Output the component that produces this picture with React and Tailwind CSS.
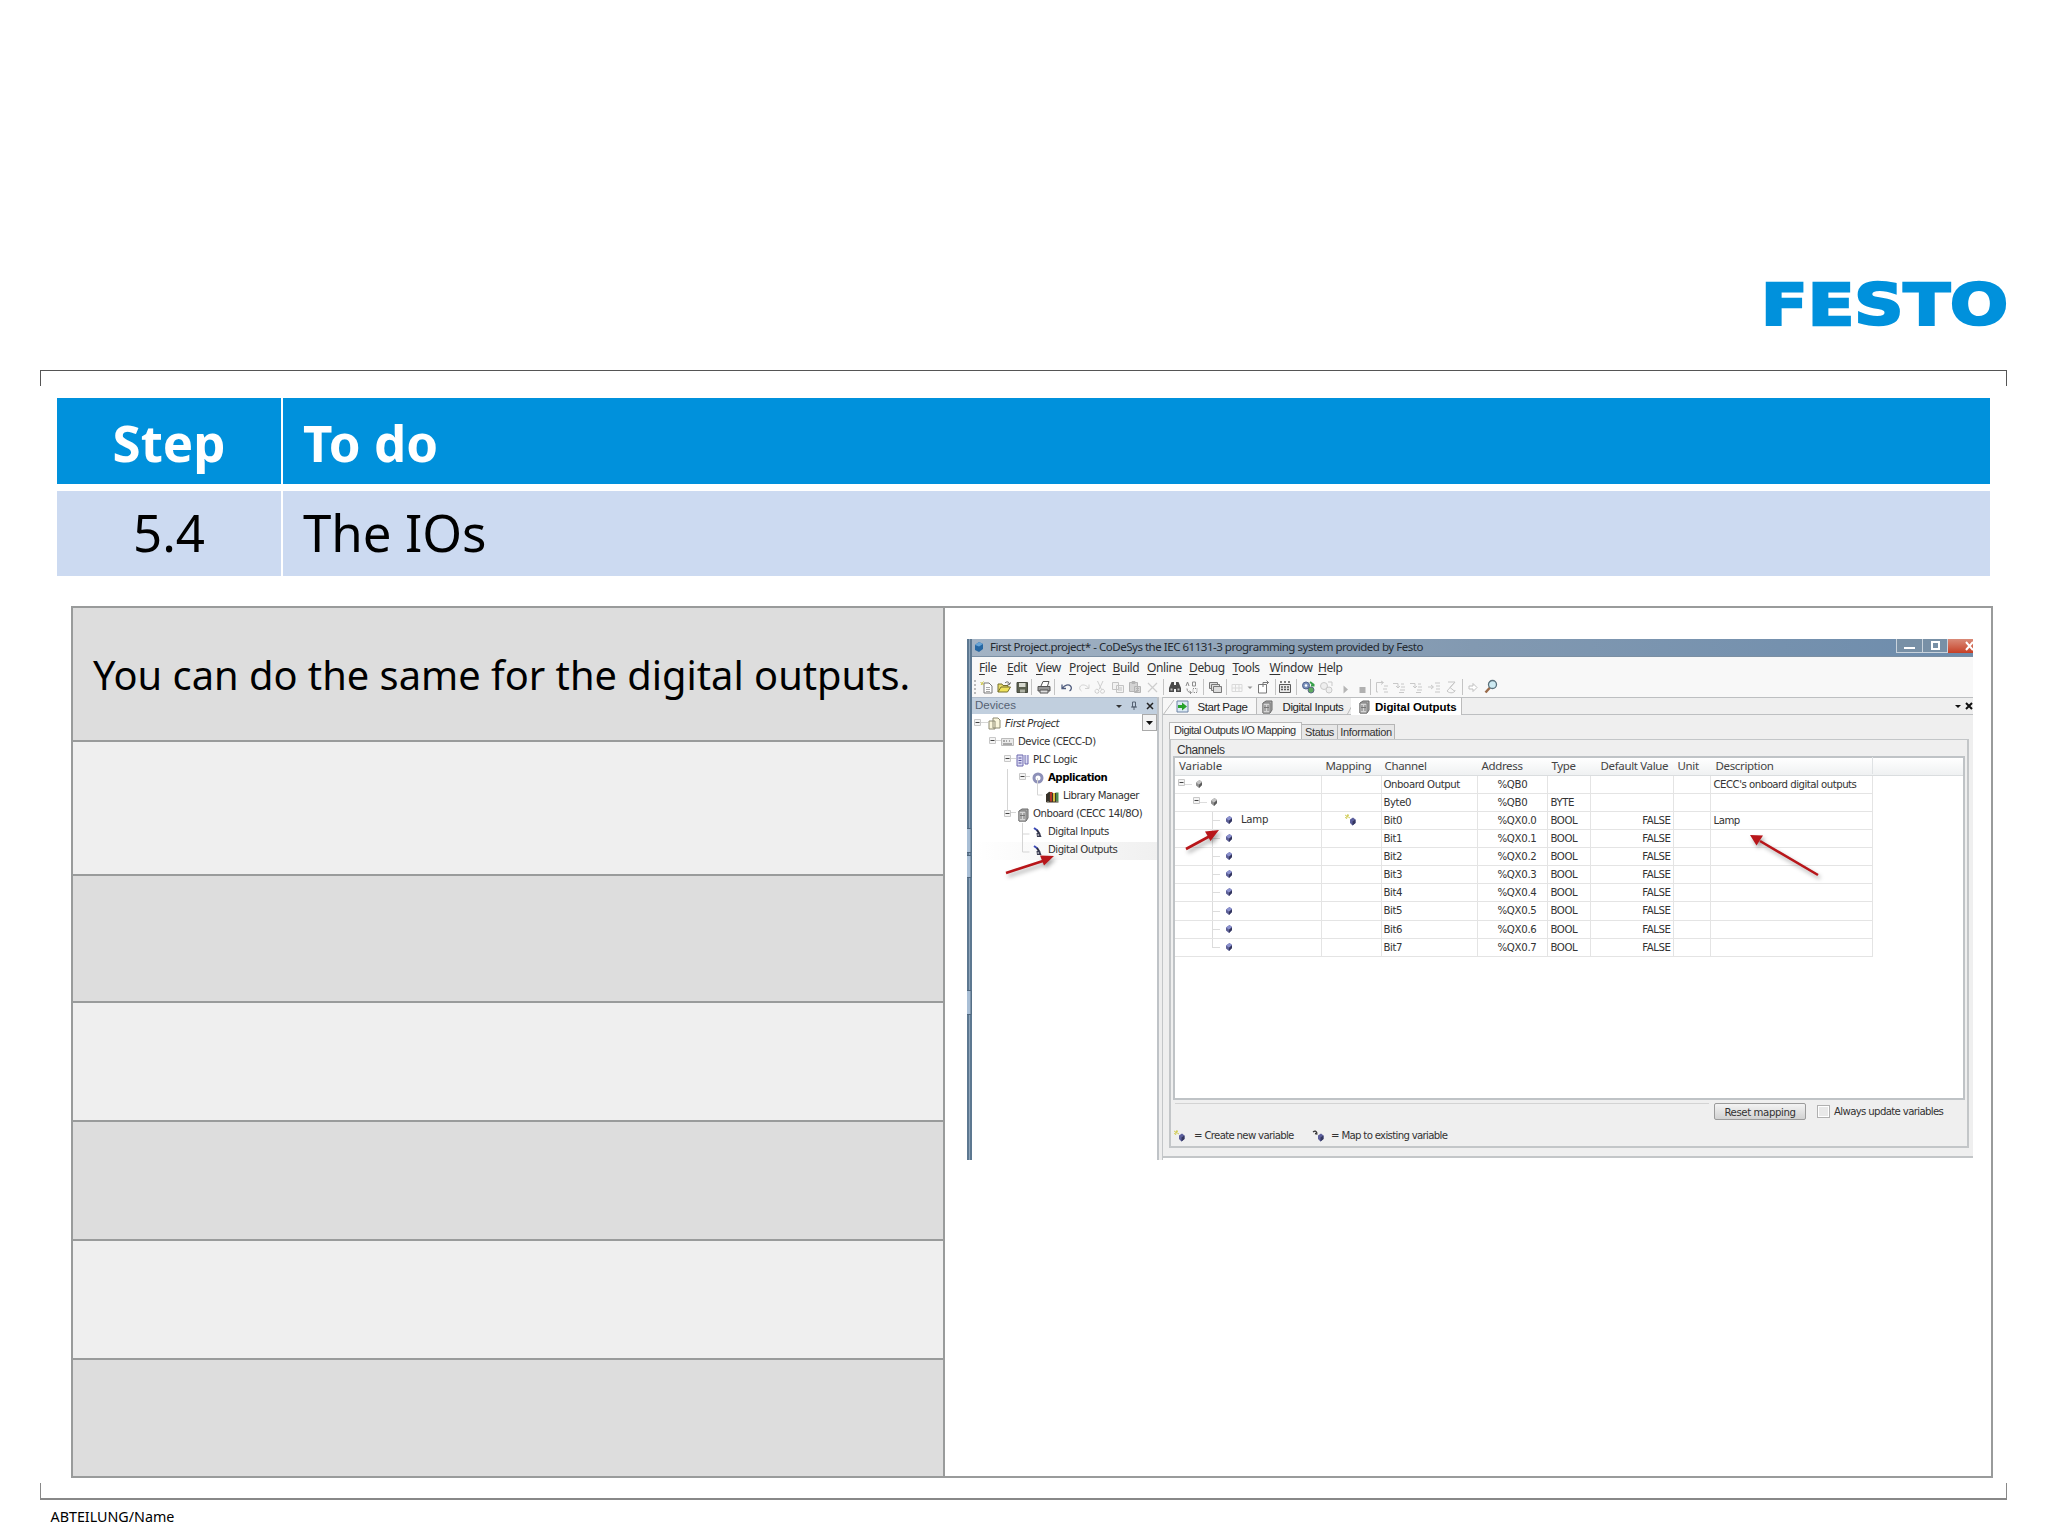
import React from 'react';
import clsx from 'clsx';

const menuItems = [
  { name: 'File', width: 'w-[28px]' },
  { name: 'Edit', width: 'w-[29px]' },
  { name: 'View', width: 'w-[33px]' },
  { name: 'Project', width: 'w-[43.5px]' },
  { name: 'Build', width: 'w-[34.5px]' },
  { name: 'Online', width: 'w-[42px]' },
  { name: 'Debug', width: 'w-[43.5px]' },
  { name: 'Tools', width: 'w-[37px]' },
  { name: 'Window', width: 'w-[48.5px]' },
  { name: 'Help', width: 'w-[40px]' },
];

const toolbar = [
  ['grip', 'ml-[1.5px]'],
  ['new', 'ml-[1.5px]'],
  ['open', 'ml-px'],
  ['save', 'ml-[1.5px]'],
  ['sep', 'ml-[1.5px]'],
  ['print', 'ml-[3px]'],
  ['sep', 'ml-[2px]'],
  ['undo', 'ml-[2.5px]'],
  ['redo', 'ml-[1.5px]'],
  ['cut', 'ml-0'],
  ['copy', 'ml-[2px]'],
  ['paste', 'ml-px'],
  ['delete', 'ml-px'],
  ['sep', 'ml-[3px]'],
  ['find', 'ml-[1.5px]'],
  ['replace', 'ml-[1.5px]'],
  ['sep', 'ml-[3px]'],
  ['windows', 'ml-[1.5px]'],
  ['sep', 'ml-[3.5px]'],
  ['grid', 'ml-px'],
  ['caret', 'ml-px'],
  ['page', 'ml-px'],
  ['sep', 'ml-[3.5px]'],
  ['build', 'ml-[0.5px]'],
  ['sep', 'ml-[3px]'],
  ['login', 'ml-[2px]'],
  ['logout', 'ml-[2px]'],
  ['play', 'ml-[3px]'],
  ['stop', 'ml-px'],
  ['sep', 'ml-0'],
  ['stepOver', 'ml-[2px]'],
  ['stepInto', 'ml-px'],
  ['stepInto', 'ml-px'],
  ['stepOut', 'ml-[2px]'],
  ['runTo', 'ml-px'],
  ['sep', 'ml-[3px]'],
  ['next', 'ml-px'],
  ['zoom', 'ml-[2px]'],
];

const icons = {
  new: (
    <g fill="#fff" stroke="#777">
      <path d="M5 4h5l3 3v7H5z" />
      <path d="M7 8.500h4M7 10.500h4M7 12.500h4" stroke="#aaa" />
      <path d="M1.500 3l3 3M4.500 2.500L2 6" stroke="#c9c23a" />
    </g>
  ),
  open: (
    <g>
      <path d="M2 13V5h4l1 1.500h5V8" fill="#e8dc6a" stroke="#77702c" />
      <path d="M2 13l3-5h9.500l-3 5z" fill="#f0e35c" stroke="#77702c" />
      <path d="M9 4c2-2 4-1 4.500 1M13.500 5.500l-2-.5M13.500 5.500l1-2" fill="none" stroke="#555" />
    </g>
  ),
  save: (
    <g>
      <path d="M3 3.500h10.500v10H3z" fill="#5b604f" stroke="#45483e" />
      <path d="M5 4h6.500v4H5z" fill="#d8dad0" />
      <path d="M6 10.500h5v3H6z" fill="#aeb1a4" />
    </g>
  ),
  print: (
    <g stroke="#555">
      <path d="M5 7l2-4.500h6L11.500 7" fill="#fff" />
      <path d="M2 7.500h12v4.500H2z" fill="#999" />
      <path d="M4 11h8v3H4z" fill="#ddd" />
    </g>
  ),
  undo: <path d="M3 5.500v4h4M3.500 9c2-3 6-4 8-2 1.500 1.500 1 4-1 5" fill="none" stroke="#4e5b7d" strokeWidth="1.300" />,
  redo: <path d="M13 5.500v4H9M12.500 9c-2-3-6-4-8-2-1.500 1.500-1 4 1 5" fill="none" stroke="#d2d2d2" />,
  cut: <path d="M5.500 2l4 8.500M11 2l-4 8.500M6 10.500a2 2 0 1 0 1 2zM9.500 10.500a2 2 0 1 1-1 2z" fill="none" stroke="#cfcfcf" />,
  copy: <path d="M2.500 3.500h6v7h-6zM6.500 6.500h7v7h-7zM8 9h4M8 11h4" fill="#f2f2f2" stroke="#c4c4c4" />,
  paste: <path d="M2.500 3.500h8v9h-8zM5 2.500h3v2H5zM7.500 7.500h6v6h-6zM9 9.500h3M9 11.500h3" fill="#d4d4d4" stroke="#b4b4b4" />,
  delete: <path d="M4 4l9 9M13 4l-9 9" stroke="#cdcdcd" strokeWidth="1.200" />,
  find: (
    <g fill="#4a4a4a">
      <path d="M4.500 3h2.500v10H2V9zM9 3h2.500L14 9v4H9z" />
      <path d="M7 6h2v4H7z" />
      <path d="M3.500 9.500h2v2h-2zM10.500 9.500h2v2h-2z" fill="#bbb" />
    </g>
  ),
  replace: (
    <g fill="none" stroke="#8c8c8c">
      <path d="M2 7l1.500-4L5 7M8.500 3h3v4h-3zM3 9.500c0 3 2 4 4 4M5.500 12l2 1.500L6 15" />
      <path d="M9 9.500h4v4H9z" strokeDasharray="1 1" />
    </g>
  ),
  windows: (
    <g fill="#ddd" stroke="#777">
      <path d="M2.500 3.500h8v6h-8z" />
      <path d="M4.500 5.500h8v6h-8z" />
      <path d="M6.500 7.500h8v6h-8z" />
    </g>
  ),
  grid: <path d="M3 5.500h10v7H3zM3 9h10M6.500 5.500v7M10 5.500v7" fill="none" stroke="#dadada" />,
  page: (
    <g fill="#fff" stroke="#777">
      <path d="M3.500 5.500h8v8.500h-8z" />
      <path d="M8 8V3.500h5.500M11.500 1.500l2 2-2 2" fill="none" />
    </g>
  ),
  build: (
    <g stroke="#5a5a5a" fill="none">
      <path d="M2.500 5.500h11v8h-11z" fill="#e9e9e9" />
      <path d="M4 8h8M4 10.500h8" strokeDasharray="2 1" strokeWidth="1.500" />
      <path d="M4 2v2M8 2v2M12 2v2" strokeWidth="1.500" />
    </g>
  ),
  login: (
    <g>
      <circle cx="6" cy="6.500" r="3.500" fill="#7b92bd" stroke="#4f618c" />
      <path d="M10 3l4 3M11 6.500h3.500" stroke="#37a04a" strokeWidth="2" />
      <circle cx="11" cy="11" r="3" fill="#5eab60" stroke="#5b6a83" />
      <circle cx="6" cy="6.500" r="1.300" fill="#fff" />
    </g>
  ),
  logout: (
    <g fill="#eee" stroke="#c9c9c9">
      <circle cx="6" cy="7" r="3.500" />
      <circle cx="11" cy="11" r="3" />
      <path d="M10 3h4v4" fill="none" />
    </g>
  ),
  play: <path d="M6.500 6.500l4.500 4-4.500 4z" fill="#b5b5b5" />,
  stop: <path d="M5.500 8h6v6h-6z" fill="#b0b0b0" />,
  stepOver: <path d="M4 13H2.500V3.500H9M7 2l2.500 1.500L7 5.500M10 7h4M9 10h4M10 13h4" fill="none" stroke="#c8c8c8" />,
  stepInto: <path d="M2 4.500h5v4M5 7l2 2 2-2M10 5h3M10 8h4M9 11h5M8 13.500h5" fill="none" stroke="#c8c8c8" />,
  stepOut: <path d="M2 8h5M5 6l2.500 2L5 10M9 4h5M10 7h4M10 10h4M9 13h5" fill="none" stroke="#c8c8c8" />,
  runTo: <path d="M5 3h7L7 8.500l5 4M4 12c3 3 8 2 8-1M12 3l-8 9" fill="none" stroke="#c6c6c6" />,
  next: <path d="M4 7h4V4.500l4 4-4 4V10H4z" fill="#fff" stroke="#c0c0c0" />,
  zoom: (
    <g>
      <path d="M7 8.500l-4.500 5" stroke="#9a6b4a" strokeWidth="2.500" />
      <circle cx="9.500" cy="5.500" r="4" fill="#cdeaf2" stroke="#59707c" strokeWidth="1.300" />
    </g>
  ),
};

const channels = [
  { level: 0, channel: 'Onboard Output', address: '%QB0', type: '', value: '', description: "CECC's onboard digital outputs" },
  { level: 1, channel: 'Byte0', address: '%QB0', type: 'BYTE', value: '' },
  { level: 2, name: 'Lamp', channel: 'Bit0', address: '%QX0.0', type: 'BOOL', value: 'FALSE', description: 'Lamp' },
  { level: 2, channel: 'Bit1', address: '%QX0.1', type: 'BOOL', value: 'FALSE' },
  { level: 2, channel: 'Bit2', address: '%QX0.2', type: 'BOOL', value: 'FALSE' },
  { level: 2, channel: 'Bit3', address: '%QX0.3', type: 'BOOL', value: 'FALSE' },
  { level: 2, channel: 'Bit4', address: '%QX0.4', type: 'BOOL', value: 'FALSE' },
  { level: 2, channel: 'Bit5', address: '%QX0.5', type: 'BOOL', value: 'FALSE' },
  { level: 2, channel: 'Bit6', address: '%QX0.6', type: 'BOOL', value: 'FALSE' },
  { level: 2, channel: 'Bit7', address: '%QX0.7', type: 'BOOL', value: 'FALSE' },
];

const ToolbarItem = ({ name, margin }) => {
  if (name === 'grip') {
    return <span className={clsx('w-1 h-[14px] border-l-2 border-dotted border-[#bbb] shrink-0', margin)} />;
  }
  if (name === 'sep') {
    return <span className={clsx('w-[2px] h-[16px] border-l border-[#c4c4c4] shrink-0', margin)} />;
  }
  if (name === 'caret') {
    return (
      <svg width="8" height="16" className={clsx('shrink-0', margin)}>
        <path d="M1.500 7.500h5L4 10z" fill="#999" />
      </svg>
    );
  }
  return (
    <svg width="16" height="16" viewBox="0 0 16 16" className={clsx('shrink-0', margin)}>
      {icons[name]}
    </svg>
  );
};

const Diamond = ({ gray }) => (
  <svg width="8" height="10" viewBox="0 0 8 10" className="mb-px shrink-0">
    <path d="M1 3.500L4.500 1 7 3v3L4 9 1 6.500z" fill={gray ? '#8f8f8f' : '#5c5f96'} />
    <path d="M4 5.500L7 3v3L4 9z" fill={gray ? '#5b5b5b' : '#34365e'} />
    <path d="M1 3.500L4.500 1 7 3 4 5.500z" fill={gray ? '#c4c4c4' : '#8c92cf'} />
  </svg>
);

// small minus box in front of an open branch
const Expander = () => (
  <svg width="7" height="7" viewBox="0 0 7 7" className="mb-[3px] shrink-0">
    <path d="M.5.500h6v6h-6z" fill="#f4f4f4" stroke="#c8c8c8" />
    <path d="M1.500 3.500h4" stroke="#444" />
  </svg>
);

const ControllerIcon = () => (
  <svg width="14" height="14" viewBox="0 0 14 14" className="shrink-0">
    <path d="M3 3l3-2h6v9l-2 3H3z" fill="#a9a9a9" stroke="#6a6a6a" />
    <path d="M3 3h7v10H3z" fill="#d5d5d5" stroke="#777" />
    <path d="M5 5v6M8 5v6M4 7.500h5" stroke="#777" />
  </svg>
);

const StartIcon = () => (
  <svg width="13" height="13" viewBox="0 0 13 13" className="shrink-0">
    <path d="M1 1h11v11H1z" fill="#dce9f5" stroke="#6d83a4" />
    <path d="M2 5h4V2.500L11 6.500 6 10.500V8H2z" fill="#26a22c" />
  </svg>
);

const IoIcon = () => (
  <svg width="12" height="14" viewBox="0 0 12 14" className="shrink-0">
    <path d="M2 2l3.500 2.500" stroke="#3b49b5" strokeWidth="2" />
    <path d="M5 4l2.500 4" fill="none" stroke="#2d2f45" strokeWidth="2" />
    <path d="M4.500 7h3.500l1.500 4H5z" fill="#3a3c52" />
    <path d="M5.500 8.500h1.500v1H5.500z" fill="#fff" />
  </svg>
);

const MapIcon = ({ existing }) => (
  <svg width="14" height="14" viewBox="0 0 14 14" className="shrink-0">
    {existing ? (
      <path d="M1 3c2-1.500 3-1 4 1M5.500 5L3 4.500" fill="none" stroke="#333" strokeWidth="1.300" />
    ) : (
      <path d="M1 2l5 3M4 1L2.500 6M1 5l4-3" stroke="#d3cf5e" />
    )}
    <path d="M6 6.500L9 4.500l2.500 2V10L8.500 12.500 6 10z" fill="#5b5e9c" />
    <path d="M8.500 8.500l3-2V10l-3 2.500z" fill="#34365e" />
  </svg>
);

const treeItems = [
  {
    name: 'First Project', indent: 'pl-[2px]', gap: 'ml-[7px]', text: 'ml-[4px] italic', open: true,
    icon: <svg width="13" height="14" viewBox="0 0 13 14"><path d="M1 4h6v8H1zM5 1h5l2 2v8H5z" fill="#faf6dc" stroke="#8d8a73" /></svg>,
  },
  {
    name: 'Device (CECC-D)', indent: 'pl-[17px]', gap: 'ml-[5px]', text: 'ml-[4px]', open: true,
    icon: <svg width="13" height="12" viewBox="0 0 13 12"><path d="M.5 2.500h12v7H.5z" fill="#e9e9e9" stroke="#bbb" /><path d="M2 5h2M5 5h1M8 5h1M2 8h9" stroke="#666" /></svg>,
  },
  {
    name: 'PLC Logic', indent: 'pl-[32px]', gap: 'ml-[5px]', text: 'ml-[4px]', open: true,
    icon: <svg width="13" height="13" viewBox="0 0 13 13"><path d="M1 1h6v11H1zM9 1v9h3V1" fill="#dcdcf5" stroke="#6c68ae" /><path d="M2.500 4h3M2.500 6.500h3M2.500 9h3" stroke="#55519a" /></svg>,
  },
  {
    name: 'Application', indent: 'pl-[47px]', gap: 'ml-[5px]', text: 'ml-[3px] font-bold text-black', open: true,
    icon: <svg width="14" height="14" viewBox="0 0 14 14"><circle cx="7" cy="7" r="4" fill="#fff" stroke="#8d90b8" strokeWidth="3" /></svg>,
  },
  {
    name: 'Library Manager', indent: 'pl-[74px]', gap: 'ml-0', text: 'ml-[4px]',
    icon: <svg width="13" height="13" viewBox="0 0 13 13"><path d="M.5 4l3-2.500v10h-3z" fill="#34312a" /><path d="M3.500 2h3v10h-3z" fill="#b3372b" /><path d="M6.500 3h3v9h-3z" fill="#d8bc3e" /><path d="M9.500 2.500h3v9h-3z" fill="#4f8c50" /><path d="M.5 4v8h12M3.500 2v10M6.500 3v9M9.500 3v9" fill="none" stroke="#3d3527" /></svg>,
  },
  {
    name: 'Onboard (CECC 14I/8O)', indent: 'pl-[32px]', gap: 'ml-[5px]', text: 'ml-[3px]', open: true,
    icon: <ControllerIcon />,
  },
  { name: 'Digital Inputs', indent: 'pl-[60px]', gap: 'ml-0', text: 'ml-[4px]', icon: <IoIcon /> },
  { name: 'Digital Outputs', indent: 'pl-[60px]', gap: 'ml-0', text: 'ml-[4px]', icon: <IoIcon />, selected: true },
];

const TitleBar = () => (
  <div className="flex h-[18px] shrink-0 items-center bg-gradient-to-r from-[#a3b3c4] via-[#8299b1] via-50% to-[#6d8cac] border-b border-[#7b8fa3] pb-px pl-px">
    <svg width="12" height="12" viewBox="0 0 12 12">
      <path d="M2 4l4-3 4 2v5l-4 3-4-2z" fill="#2667a2" />
      <path d="M2 4l4-3 4 2-4 2.500z" fill="#68a4d5" />
    </svg>
    <span className="ml-[5px] text-[11.5px] tracking-[-0.47px] whitespace-nowrap text-[#23292f]">
      First Project.project* - CoDeSys the IEC 61131-3 programming system provided by Festo
    </span>
    <div className="ml-auto flex self-start h-[14px] text-white">
      <span className="flex w-[26px] items-end justify-center border-l border-b border-[#c9d3dc] bg-[#7890a6] pb-[3px]">
        <span className="h-[2px] w-[11px] bg-white" />
      </span>
      <span className="flex w-[25px] items-center justify-center border-l border-b border-[#c9d3dc] bg-[#7890a6]">
        <span className="h-[9px] w-[9px] border-2 border-white" />
      </span>
      <span className="flex w-[26px] items-center justify-end overflow-hidden border-l border-[#c9d3dc] bg-gradient-to-b from-[#d98a78] to-[#c53e24]">
        <svg width="8" height="10" viewBox="0 0 8 10">
          <path d="M1 1l7 8M8 1L1 9" stroke="#fff" strokeWidth="2" />
        </svg>
      </span>
    </div>
  </div>
);

const DevicePanel = () => (
  <div className="w-[187px] shrink-0 border-r-2 border-[#bfc3c7] bg-white">
    <div className="flex h-[17px] items-center border-t border-[#b0bccb] bg-[#c1cfde] pb-px pl-[3px] font-['Liberation_Sans'] text-[11.5px] text-[#566273]">
      Devices
      <svg width="42" height="12" viewBox="0 0 42 12" className="ml-auto mr-[3px]">
        <path d="M4 5h6l-3 3z" fill="#333" />
        <path d="M20.500 2h3v5h-3zM19 7h6M22 7v3" fill="none" stroke="#566273" />
        <path d="M35 3l6 6M41 3l-6 6" stroke="#222" strokeWidth="1.500" />
      </svg>
    </div>
    <div className="relative pt-px">
      {treeItems.map((item) => (
        <div
          key={item.name}
          className={clsx('flex h-[18.1px] items-center whitespace-nowrap', item.indent, item.selected && 'bg-gradient-to-r from-white to-[#f0f0f0]')}
        >
          {item.open && <Expander />}
          <span className={clsx('shrink-0', item.gap)}>{item.icon}</span>
          <span className={clsx("font-['DejaVu_Sans_Condensed','Noto_Sans',sans-serif] text-[11.3px] tracking-[-0.5px]", item.text)}>{item.name}</span>
        </div>
      ))}
      {/* dropdown of the root node */}
      <span className="absolute right-0 top-0 flex h-[17px] w-[15px] items-center justify-center border border-[#aaa] bg-[#f3f3f3]">
        <svg width="7" height="4">
          <path d="M0 0h7L3.500 4z" fill="#111" />
        </svg>
      </span>
      {/* branch lines */}
      <svg width="90" height="145" className="pointer-events-none absolute left-0 top-px">
        <path d="M35.500 54v42M50.500 108v29h7M50.500 119h7M65.500 63v17h5M9 7.500h7M24 25.500h5M39 43.500h5M54 61.500h4M39 97.500h5" fill="none" stroke="#d5d5d5" />
      </svg>
    </div>
  </div>
);

const EditorTabs = () => (
  <div className="flex h-[18px] shrink-0 items-center border-y border-[#bdbfc1] bg-[#efefef] font-['Liberation_Sans'] text-[11.5px] leading-[18px] text-[#222]">
    <div className="flex h-full items-center border-r border-[#bbb] bg-[#f7f7f7] pt-px w-[94px]">
      <svg width="13" height="16" className="shrink-0">
        <path d="M0 16L11 1" stroke="#bbb" />
      </svg>
      <StartIcon />
      <span className="ml-[8.5px] tracking-[-0.45px] whitespace-nowrap">Start Page</span>
    </div>
    <div className="flex h-full w-[94px] items-center pl-[3px] pt-px">
      <ControllerIcon />
      <span className="ml-[8.5px] tracking-[-0.4px] whitespace-nowrap">Digital Inputs</span>
      <svg width="10" height="16" className="ml-[2.5px] shrink-0">
        <path d="M1 16L9 1" stroke="#bbb" />
      </svg>
    </div>
    <div className="flex h-[17px] w-[111px] items-center border-r border-[#bbb] bg-white pl-[6px] pt-px">
      <ControllerIcon />
      <span className="ml-[4px] font-bold tracking-[-0.05px] whitespace-nowrap text-black">Digital Outputs</span>
    </div>
    <svg width="18" height="12" viewBox="0 0 18 12" className="ml-auto">
      <path d="M0 5h6L3 8z" fill="#111" />
      <path d="M11 3l6 6M17 3l-6 6" stroke="#111" strokeWidth="2" />
    </svg>
  </div>
);

const ChannelTable = () => (
  <div className="ml-[2px] mr-[2px] h-[344px] shrink-0 border-2 border-[#bfc3c6] bg-white font-['DejaVu_Sans_Condensed','Noto_Sans',sans-serif] text-[11.3px] tracking-[-0.43px]">
    <div className="flex h-[17.500px] items-center border-b border-[#dadddf] bg-gradient-to-b from-white to-[#eff1f2] pb-px font-['Noto_Sans',sans-serif] text-[11.5px] tracking-[-0.35px] text-[#444]">
      <span className="w-[146.5px] pl-[4px] tracking-[-0.1px]">Variable</span>
      <span className="w-[60px] pl-[4px]">Mapping</span>
      <span className="w-[96px] pl-[3px]">Channel</span>
      <span className="w-[70px] pl-[4px]">Address</span>
      <span className="w-[43px] pl-[4px]">Type</span>
      <span className="w-[83px] whitespace-nowrap pl-[10px]">Default Value</span>
      <span className="w-[37px] pl-[4px]">Unit</span>
      <span className="flex h-[17px] w-[162px] items-center border-r border-[#dfe2e4] pl-[5px]">Description</span>
    </div>
    {channels.map((row) => (
      <div key={row.channel} className="flex h-[18.150px] w-[698px] items-stretch whitespace-nowrap leading-[18.5px]">
        <div className="flex w-[146.5px] items-center border-b border-r border-[#e4e4e4]">
          {row.level === 0 && (
            <>
              <span className="ml-[3px]"><Expander /></span>
              <span className="mr-[3px] w-[7px] border-t border-[#ddd]" />
              <Diamond gray />
            </>
          )}
          {row.level === 1 && (
            <>
              <span className="ml-[18px]"><Expander /></span>
              <span className="mr-[3px] w-[7px] border-t border-[#ddd]" />
              <Diamond gray />
            </>
          )}
          {row.level === 2 && (
            <>
              <span
                className={clsx('ml-[37px] w-[7px] border-l border-[#dcdcdc]', row.channel === 'Bit7' ? 'h-[9px] self-start' : 'h-full')}
              />
              <span className="-ml-[6px] mr-[5px] w-[7px] border-t border-[#dcdcdc]" />
              <Diamond />
              <span className="ml-[8px] tracking-[-0.3px]">{row.name}</span>
            </>
          )}
        </div>
        <div className="flex w-[60px] items-center border-b border-r border-[#e4e4e4] pl-[22px]">{row.name && <MapIcon />}</div>
        <div className="w-[96px] border-b border-r border-[#e4e4e4] pl-[2px]">{row.channel}</div>
        <div className="w-[70px] border-b border-r border-[#e4e4e4] pl-[20px] tracking-[-0.3px]">{row.address}</div>
        <div className="w-[43px] border-b border-r border-[#e4e4e4] pl-[3px]">{row.type}</div>
        <div className="w-[83px] border-b border-r border-[#e4e4e4] pr-[2px] text-right">{row.value}</div>
        <div className="w-[37px] border-b border-r border-[#e4e4e4]" />
        <div className="w-[162px] border-b border-r border-[#e4e4e4] pl-[3px] tracking-[-0.5px]">{row.description}</div>
      </div>
    ))}
  </div>
);

const Editor = () => (
  <div className="flex min-w-0 flex-1 flex-col bg-[#efefef]">
    <EditorTabs />
    <div className="flex flex-1 flex-col border-b-2 border-[#c3c6c8] pl-[6px] pr-[4px] pt-[7px]">
      <div className="flex h-[17px] shrink-0 items-end font-['Liberation_Sans'] text-[11px] tracking-[-0.5px] text-[#333]">
        <span className="flex h-[17px] w-[133px] items-center whitespace-nowrap border border-b-0 border-[#bbb] bg-[#fafafa] pb-px pl-[4px]">
          Digital Outputs I/O Mapping
        </span>
        <span className="flex h-[15px] w-[36px] items-center justify-center border border-l-0 border-b-0 border-[#b5b5b5] bg-[#e7e7e7] tracking-[-0.4px]">
          Status
        </span>
        <span className="flex h-[15px] w-[57px] items-center justify-center border border-l-0 border-b-0 border-[#b5b5b5] bg-[#e7e7e7] tracking-[-0.3px]">
          Information
        </span>
      </div>
      <div className="mb-[8px] flex flex-1 flex-col border-2 border-t border-[#c3c6c8]">
        <div className="h-[16px] shrink-0 pl-[6px] font-['Liberation_Sans'] text-[12px] leading-[20px] tracking-[-0.4px]">Channels</div>
        <ChannelTable />
        <div className="ml-[4px] flex h-[24px] shrink-0 items-start pt-[3px] font-['DejaVu_Sans_Condensed','Noto_Sans',sans-serif] text-[11.3px] tracking-[-0.43px]">
          <span className="h-[17px] w-[534px] border-t border-[#d3d3d3]" />
          <span className="ml-[5px] flex h-[17px] w-[92px] justify-center rounded-[2px] border border-[#9b9b9b] bg-gradient-to-b from-[#f3f3f3] to-[#d2d2d2] leading-[17px] tracking-[-0.4px]">
            Reset mapping
          </span>
          <span className="ml-[11px] mt-[2px] h-[13px] w-[13px] border border-[#b0b0b0] bg-[#e8e8e8] shadow-[inset_0_0_0_1px_#fff]" />
          <span className="ml-[4px] whitespace-nowrap leading-[17px] tracking-[-0.65px]">Always update variables</span>
        </div>
        <div className="flex h-[20px] items-center pl-[2px] pt-[4px] font-['DejaVu_Sans_Condensed','Noto_Sans',sans-serif] text-[11.3px] tracking-[-0.68px]">
          <MapIcon />
          <span className="ml-[7px] w-[118px] whitespace-nowrap">= Create new variable</span>
          <MapIcon existing />
          <span className="ml-[5px] whitespace-nowrap">= Map to existing variable</span>
        </div>
      </div>
    </div>
    <div className="h-[2px] bg-white" />
  </div>
);

const CodesysWindow = () => (
  <div className="relative flex h-[521px] w-[1006px] overflow-hidden font-['Noto_Sans',sans-serif] text-[#333]">
    {/* Left frame with its docked handles */}
    <svg width="5" height="521" className="shrink-0 bg-[#5d7891]">
      <path d="M2.500 0v521" stroke="#8ea5ba" />
      <path d="M-1 189.500h5v24h-5zM-1 216.500h5v22h-5zM-1 351.500h5v24h-5z" fill="#a9bfd6" stroke="#4f667d" />
    </svg>
    <div className="flex min-w-0 flex-1 flex-col">
      <TitleBar />
      <div className="flex h-[21px] shrink-0 items-center bg-[#f8f8f8] pl-[7px] text-[12px] tracking-[-0.4px]">
        {menuItems.map((item) => (
          <span key={item.name} className={item.width}>
            <u className="underline-offset-2">{item.name[0]}</u>
            {item.name.slice(1)}
          </span>
        ))}
      </div>
      <div className="flex h-[19px] shrink-0 items-center bg-[#f8f8f8] pb-[2px]">
        {toolbar.map(([name, margin], i) => (
          <ToolbarItem key={i} name={name} margin={margin} />
        ))}
      </div>
      <div className="flex flex-1">
        <DevicePanel />
        <div className="w-[4px] shrink-0 border-r border-[#c3c6c8] bg-[#eeeeee]" />
        <Editor />
      </div>
    </div>

    {/* Red pointers */}
    <svg width="1006" height="521" className="pointer-events-none absolute left-0 top-0 drop-shadow-[2px_3px_2px_rgba(0,0,0,0.35)]">
      <g fill="#b8161a">
        <path d="M39 234L79 221M219 210L243 197M851 236L793 202" stroke="#b8161a" strokeWidth="2.600" />
        <path d="M87 217l-14-.5 4 10zM252 191l-14 1.500 5.500 9.500zM783 196l13 .5-6.500 10z" />
      </g>
    </svg>
  </div>
);

const stepRows = [
  { text: 'You can do the same for the digital outputs.', className: 'h-[134px] bg-[#dddddd] pt-[2px]' },
  { className: 'h-[134px] bg-[#efefef]' },
  { className: 'h-[127px] bg-[#dddddd]' },
  { className: 'h-[119px] bg-[#efefef]' },
  { className: 'h-[119px] bg-[#dddddd]' },
  { className: 'h-[119px] bg-[#efefef]' },
  { className: 'h-[118px] bg-[#dddddd]' },
];

export default function App() {
  return (
    <div className="flex h-[1536px] w-[2048px] flex-col overflow-hidden bg-white font-['Noto_Sans',sans-serif] text-black">
      {/* Logo */}
      <header className="flex h-[370px] shrink-0 justify-end pr-[36px] pt-[266px]">
        <svg width="252" height="80" viewBox="0 0 252 80">
          <text
            x="1"
            y="58.500"
            textLength="247"
            lengthAdjust="spacingAndGlyphs"
            className="fill-[#0091dc] stroke-[#0091dc] stroke-[2.5px] font-['DejaVu_Sans'] text-[57px] font-bold"
          >
            FESTO
          </text>
        </svg>
      </header>

      <div className="ml-[40px] h-[16px] w-[1967px] shrink-0 border border-b-0 border-[#555]" />

      <main className="h-[1097px] shrink-0 pt-[12px]">
        {/* Heading table */}
        <div className="ml-[57px] grid w-[1933px] grid-cols-[224px_1fr] gap-x-[2px] gap-y-[7px] text-[51px] leading-none">
          <div className="flex h-[86px] items-center justify-center bg-[#0091dc] pt-[2px] font-bold text-white">Step</div>
          <div className="flex h-[86px] items-center bg-[#0091dc] pl-[20px] pt-[2px] font-bold text-white">To do</div>
          <div className="flex h-[85px] items-center justify-center bg-[#ccdaf1] pb-[2px]">5.4</div>
          <div className="flex h-[85px] items-center bg-[#ccdaf1] pb-[2px] pl-[20px]">The IOs</div>
        </div>

        {/* Instructions and screen */}
        <div className="ml-[71px] mt-[30px] flex h-[872px] w-[1922px] border-2 border-b-0 border-[#999b9b]">
          <div className="w-[872px] shrink-0 border-r-2 border-[#999b9b]">
            {stepRows.map((row, i) => (
              <div key={i} className={clsx('flex items-center border-b-2 border-[#999b9b] pl-[20px] text-[39.8px] whitespace-nowrap', row.className)}>
                {row.text}
              </div>
            ))}
          </div>
          <div className="flex-1 border-b-2 border-[#999b9b] pl-[22px] pt-[31px]">
            <CodesysWindow />
          </div>
        </div>
      </main>

      <div className="ml-[40px] h-[17px] w-[1967px] shrink-0 border border-b-2 border-t-0 border-[#888]" />
      <footer className="pl-[50.500px] pt-[6px] text-[14.3px]">ABTEILUNG/Name</footer>
    </div>
  );
}
